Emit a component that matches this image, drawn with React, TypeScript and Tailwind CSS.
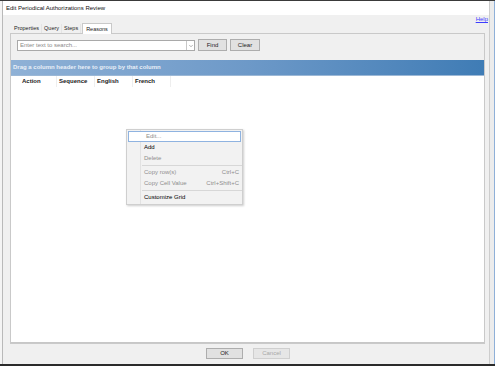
import { ChevronDown } from 'lucide-react'

const tabs = ['Properties', 'Query', 'Steps', 'Reasons']

const columns = [
  { label: 'Action', width: 'w-[46px]', pad: 'pl-[11px]' },
  { label: 'Sequence', width: 'w-[38px]', pad: 'pl-[2px]' },
  { label: 'English', width: 'w-[38px]', pad: 'pl-[2px]' },
  { label: 'French', width: 'w-[38px]', pad: 'pl-[2px]' },
]

// Context menu entries
const menuItems = [
  { label: 'Edit...', state: 'hover' },
  { label: 'Add', state: 'on' },
  { label: 'Delete', state: 'off' },
  { sep: true },
  { label: 'Copy row(s)', shortcut: 'Ctrl+C', state: 'off' },
  { label: 'Copy Cell Value', shortcut: 'Ctrl+Shift+C', state: 'off' },
  { sep: true },
  { label: 'Customize Grid', state: 'on' },
]

const ContextMenu = () => (
  <div className="absolute left-[126px] top-[129px] w-[117px] bg-[#f2f2f2] border border-[#cfcfcf] py-[1px] shadow-[1px_1px_2px_rgba(0,0,0,0.2)]">
    <div className="absolute left-[13px] top-0 bottom-0 w-px bg-[#e2e2e2]" />
    {menuItems.map((item, i) =>
      item.sep ? (
        <div key={i} className="ml-[15px] my-[1px] h-px bg-[#d7d7d7]" />
      ) : (
        <div
          key={i}
          className={`relative flex items-center h-[11px] pl-[17px] pr-[3px] text-[6px] ${
            item.state === 'hover' ? 'border border-[#8fb3e0] bg-white mx-[1px] pl-[15px] pr-[1px]' : ''
          } ${item.state === 'on' ? 'text-black' : 'text-[#8e8e8e]'}`}
        >
          <span className="flex-1">{item.label}</span>
          {item.shortcut && <span>{item.shortcut}</span>}
        </div>
      )
    )}
  </div>
)

export default function App() {
  return (
    <div
      className="relative w-[495px] h-[366px] flex flex-col bg-[#f0f0f0] overflow-hidden text-[#222]"
      style={{ fontFamily: '"Liberation Sans", Arial, sans-serif' }}
    >
      <div className="h-px bg-[#3a3a3a]" />
      <div className="flex-1 flex">
        {/* left edge of window behind */}
        <div className="w-[3px] bg-[#f4f4f4] border-r border-[#b9b9b9]" />

        <div className="flex-1 flex flex-col">
          <div className="h-[14px] bg-white flex items-center pl-[3px] text-[6px] text-[#111]">
            Edit Periodical Authorizations Review
          </div>

          <div className="flex-1 flex flex-col bg-[#f0f0f0] pl-[7px] pr-[4px]">
            <div className="h-[7px] flex justify-end items-end -mr-[3px]">
              <span className="text-[6px] text-[#3d3dff] underline leading-none">Help</span>
            </div>

            <div className="flex items-end h-[10px] pl-[2px] mt-px">
              {tabs.map((t) =>
                t === 'Reasons' ? (
                  <div
                    key={t}
                    className="h-[11px] -mb-px ml-[1px] px-[3px] flex items-center text-[5.5px] bg-white border border-b-0 border-[#c9c9c9] relative z-10"
                  >
                    {t}
                  </div>
                ) : (
                  <div key={t} className="h-[9px] px-[2px] flex items-center text-[5.5px] bg-[#f0f0f0] border-r border-[#e4e4e4]">
                    {t}
                  </div>
                )
              )}
            </div>

            <div className="h-[311px] border border-[#c9c9c9] flex flex-col bg-[#f0f0f0]">
              <div className="h-[26px] flex items-start pt-[6px] pl-[6px] gap-[3px]">
                <div className="w-[178px] h-[11px] bg-white border border-[#a9a9a9] flex items-center">
                  <span className="flex-1 pl-[2px] text-[6px] text-[#8a8a8a]">Enter text to search...</span>
                  <div className="w-[8px] h-full border-l border-[#c8c8c8] flex items-center justify-center text-[#666]">
                    <ChevronDown size={6} strokeWidth={2} />
                  </div>
                </div>
                <div className="w-[29px] h-[12px] -mt-px bg-[#e1e1e1] border border-[#adadad] flex items-center justify-center text-[6px]">
                  Find
                </div>
                <div className="w-[30px] h-[12px] -mt-px bg-[#e1e1e1] border border-[#adadad] flex items-center justify-center text-[6px]">
                  Clear
                </div>
              </div>

              <div className="flex-1 bg-white border-b border-[#c7c7c7] flex flex-col">
                <div className="h-[16px] bg-gradient-to-r from-[#8fb1d6] via-[#6d99c8] to-[#3f7cb5] flex items-center pl-[2px] text-[6px] font-bold text-[#e9eff7] border-b border-[#9cb8d6]">
                  Drag a column header here to group by that column
                </div>
                <div className="h-[11px] flex items-center text-[6px] font-bold text-[#222]">
                  {columns.map((c) => (
                    <div key={c.label} className={`${c.width} ${c.pad} h-full flex items-center border-r border-[#eeeeee]`}>
                      {c.label}
                    </div>
                  ))}
                </div>
              </div>
            </div>

            <div className="flex-1 flex justify-center items-start pt-[4px] gap-[10px] pl-[1px]">
              <div className="w-[37px] h-[11px] bg-[#e1e1e1] border border-[#adadad] flex items-center justify-center text-[6px]">
                OK
              </div>
              <div className="w-[37px] h-[11px] bg-[#e6e6e6] border border-[#cfcfcf] flex items-center justify-center text-[6px] text-[#a8a8a8]">
                Cancel
              </div>
            </div>
          </div>
        </div>

        {/* right edge: window behind */}
        <div className="w-[6px] bg-[#ececec] border-l border-[#cdcdcd] flex">
          <div className="flex-1" />
          <div className="w-px bg-[#8fb0d8]" />
        </div>
      </div>
      <div className="h-[2px] bg-[#2b2b2b]" />

      <ContextMenu />
    </div>
  )
}
